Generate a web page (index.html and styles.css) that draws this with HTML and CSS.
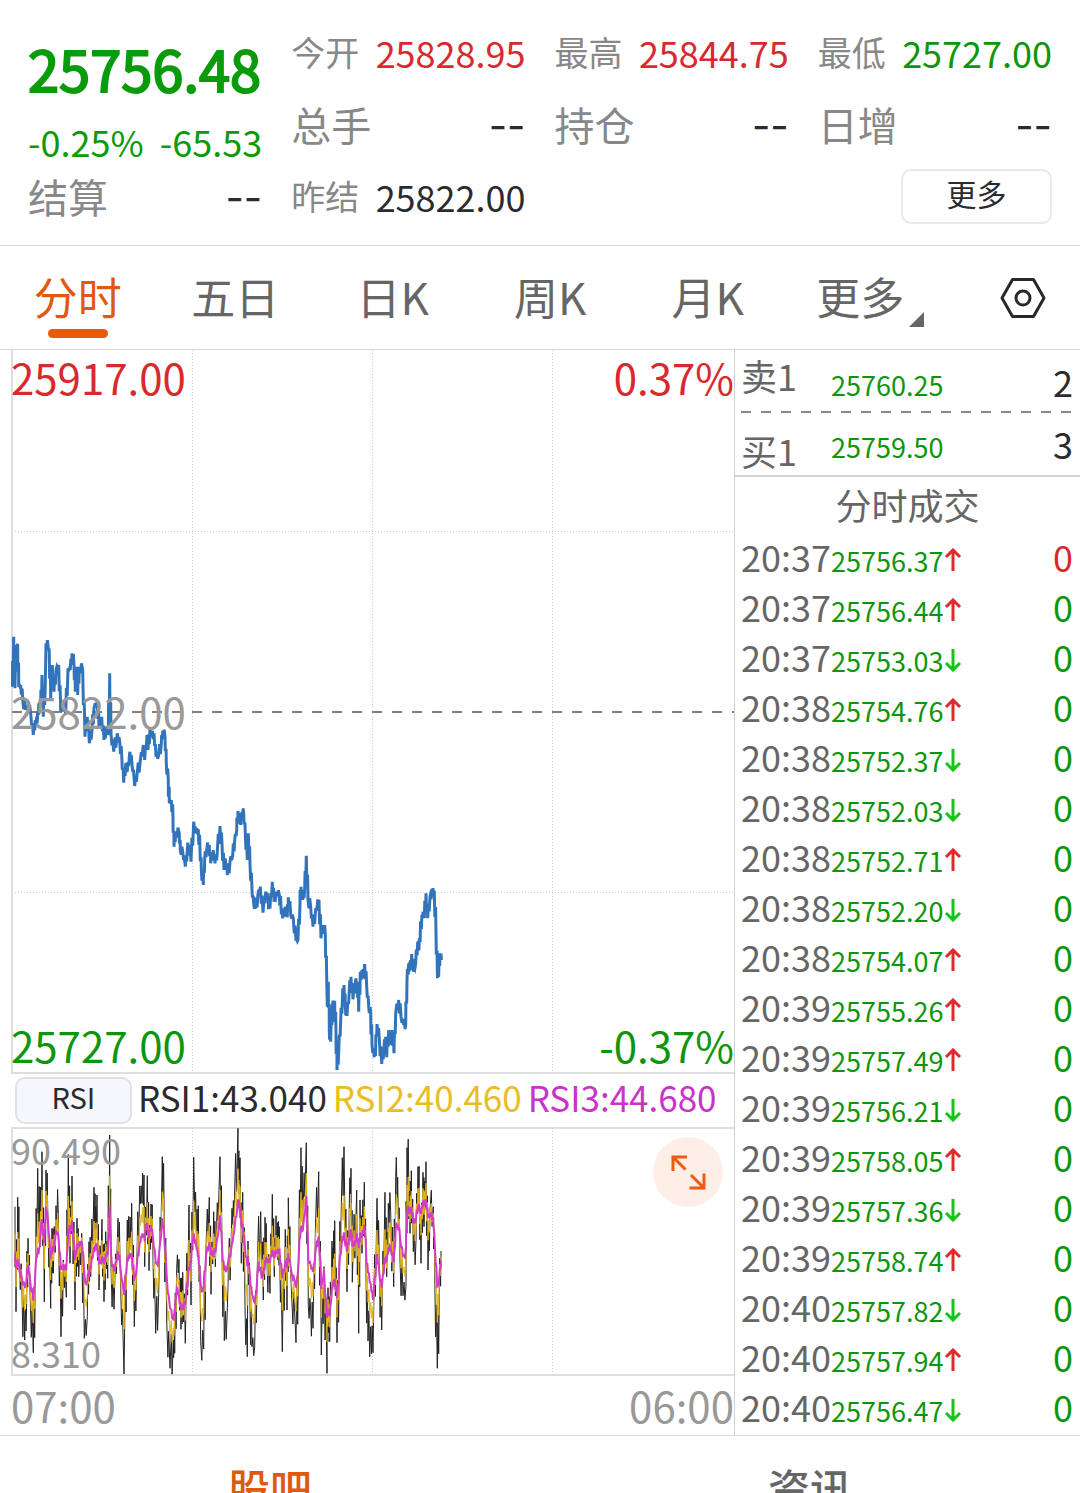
FILE: index.html
```html
<!DOCTYPE html>
<html lang="zh-CN">
<head>
<meta charset="utf-8">
<meta name="viewport" content="width=device-width, initial-scale=1">
<title>分时行情</title>
<link rel="stylesheet" href="styles.css">
</head>
<body>
<svg class="sprite" aria-hidden="true">
  <symbol id="up" viewBox="0 0 18 24"><path d="M9 23V2M2 9l7-7 7 7"/></symbol>
  <symbol id="down" viewBox="0 0 18 24"><path d="M9 1v21M2 15l7 7 7-7"/></symbol>
</svg>
<div class="app">
  <header class="quote">
    <div class="headline">
      <div class="last">25756.48</div>
      <div class="change"><span>-0.25%</span><span>-65.53</span></div>
    </div>
    <div class="stat"><span class="name">今开</span><span class="rise">25828.95</span></div>
    <div class="stat"><span class="name">最高</span><span class="rise">25844.75</span></div>
    <div class="stat"><span class="name">最低</span><span class="fall">25727.00</span></div>
    <div class="stat"><span class="name large">总手</span><span class="empty">--</span></div>
    <div class="stat"><span class="name large">持仓</span><span class="empty">--</span></div>
    <div class="stat"><span class="name large">日增</span><span class="empty">--</span></div>
    <div class="stat"><span class="name large">结算</span><span class="empty">--</span></div>
    <div class="stat"><span class="name">昨结</span><span>25822.00</span></div>
    <button class="more" type="button">更多</button>
  </header>

  <nav class="periods">
    <button class="active" type="button">分时</button>
    <button type="button">五日</button>
    <button type="button">日K</button>
    <button type="button">周K</button>
    <button type="button">月K</button>
    <button class="menu" type="button">更多<svg class="corner" viewBox="0 0 15 15" aria-hidden="true"><path d="M15 0v15H0z"/></svg></button>
    <button class="settings" type="button" aria-label="设置">
      <svg viewBox="0 0 46 42" aria-hidden="true"><path d="M12.500 2.500h21L44 21 33.500 39.500h-21L2 21z"/><circle cx="23" cy="21" r="7"/></svg>
    </button>
  </nav>

  <main class="board">
    <section class="charts">
      <div class="plot price-plot">
        <svg viewBox="11 350 723 724" preserveAspectRatio="none" aria-hidden="true">
          <path class="dots" d="M192.500 350V1073M372.500 350V1073M552.500 350V1073M12 531.500H734M12 892.500H734"/>
          <path class="frame" d="M12 350V1073H734"/>
          <path class="middle" d="M12 712H734"/>
          <path class="price-line" id="price"/>
        </svg>
        <span class="tag top left rise">25917.00</span>
        <span class="tag top right rise">0.37%</span>
        <span class="tag center left muted">25822.00</span>
        <span class="tag bottom left fall">25727.00</span>
        <span class="tag bottom right fall">-0.37%</span>
      </div>
      <div class="indicator">
        <button type="button">RSI</button>
        <span>RSI1:43.040</span>
        <span class="rsi2">RSI2:40.460</span>
        <span class="rsi3">RSI3:44.680</span>
      </div>
      <div class="plot rsi-plot">
        <svg viewBox="11 1127 723 249" preserveAspectRatio="none" aria-hidden="true">
          <path class="dots" d="M192.500 1128V1375M372.500 1128V1375M552.500 1128V1375"/>
          <path class="frame" d="M734 1128H12V1375H734"/>
          <path class="fast" id="rsi1"/>
          <path class="mid" id="rsi2"/>
          <path class="slow" id="rsi3"/>
        </svg>
        <span class="tag top left muted">90.490</span>
        <span class="tag bottom left muted">8.310</span>
        <button class="expand" type="button" aria-label="全屏">
          <svg viewBox="0 0 70 70" aria-hidden="true"><path d="M34 20H20v14M20 20l12.500 12.500M36.500 51H51V36.500M51 51L38 38"/></svg>
        </button>
      </div>
      <div class="times"><span>07:00</span><span>06:00</span></div>
    </section>

    <section class="trades">
      <table class="book">
        <tr class="ask"><th scope="row">卖1</th><td class="price">25760.25</td><td class="qty">2</td></tr>
        <tr class="bid"><th scope="row">买1</th><td class="price">25759.50</td><td class="qty">3</td></tr>
      </table>
      <h2>分时成交</h2>
      <table class="ticks"><tbody id="ticks"></tbody></table>
    </section>
  </main>

  <nav class="sections">
    <a class="active" href="#guba">股吧</a>
    <a href="#news">资讯</a>
  </nav>
</div>
<script src="app.js"></script>
</body>
</html>
```
FILE: styles.css
```css
* { box-sizing: border-box; }

body {
  margin: 0;
  background: #fff;
  color: #2b2b2d;
  font-family: "Noto Sans CJK SC", "Noto Sans", sans-serif;
  font-size: 36px;
}

button {
  padding: 0;
  border: 0;
  background: none;
  color: inherit;
  font: inherit;
}

.sprite { position: absolute; width: 0; height: 0; }

.app {
  display: flex;
  flex-direction: column;
  height: 100vh;
  overflow: hidden;
}

.rise { color: #d9292e; }
.fall { color: #0d960d; }
.muted { color: #999; }

/* Quote header */
.quote {
  display: grid;
  grid-template-columns: repeat(4, 1fr);
  grid-template-rows: repeat(3, 72px);
  column-gap: 29px;
  flex: none;
  padding: 16px 28px 13px;
  border-bottom: 1px solid #d8d8d8;
}

.headline {
  grid-row: span 2;
  padding-top: 20px;
  color: #0a9b0a;
}

.last {
  font-size: 56px;
  line-height: 64px;
  -webkit-text-stroke: 2px currentColor;
}

.change {
  display: flex;
  justify-content: space-between;
  margin-top: 22px;
  line-height: 38px;
}

.stat {
  display: flex;
  align-items: center;
  justify-content: space-between;
  line-height: 72px;
}

.name { color: #888; font-size: 34px; }
.name.large { font-size: 40px; }
.empty { padding-top: 4px; font-family: Inter, sans-serif; font-size: 40px; line-height: 68px; }

.more {
  grid-column: 4;
  justify-self: end;
  align-self: center;
  width: 151px;
  height: 55px;
  padding-bottom: 6px;
  border: 2px solid #e9e9e9;
  border-radius: 10px;
  font-size: 30px;
  line-height: 44px;
}

/* Period tabs */
.periods {
  display: grid;
  grid-template-columns: repeat(6, 7fr) 6fr;
  flex: none;
  height: 104px;
  border-bottom: 1px solid #d8d8d8;
}

.periods button {
  position: relative;
  display: flex;
  align-items: center;
  justify-content: center;
  padding: 0 2px 4px 0;
  color: #666;
  font-size: 44px;
}

.periods .active { color: #e0590f; }

.periods .active::after {
  content: "";
  position: absolute;
  bottom: 11px;
  left: calc(50% - 31px);
  width: 60px;
  height: 9px;
  border-radius: 5px;
  background: #e65a0c;
}

.periods .menu { padding-right: 0; padding-left: 8px; }

.corner {
  align-self: flex-end;
  width: 15px;
  height: 15px;
  margin: 0 0 18px 5px;
  fill: #666;
}

.periods .settings { justify-content: flex-end; padding: 0 34px 0 0; }

.settings svg {
  width: 46px;
  height: 42px;
  fill: none;
  stroke: #28282a;
  stroke-width: 3;
  stroke-linejoin: round;
}

/* Charts and trades */
.board {
  display: grid;
  grid-template-columns: 49fr 23fr;
  flex: none;
  border-bottom: 1px solid #d8d8d8;
}

.charts { border-right: 1px solid #d0d0d0; }

.plot { position: relative; margin-left: 11px; }
.plot > svg { display: block; width: 100%; height: 100%; }
.plot path { fill: none; vector-effect: non-scaling-stroke; }
.price-plot { height: 724px; }
.rsi-plot { height: 249px; }

.frame { stroke: #dedede; stroke-width: 2; }
.dots { stroke: #ccc; stroke-width: 1; stroke-dasharray: 1 2; }
.middle { stroke: #808080; stroke-width: 2; stroke-dasharray: 10 10; }
.price-line { stroke: #3274bb; stroke-width: 3; }
.fast { stroke: #222; stroke-width: 1; }
.mid { stroke: #e3b51c; stroke-width: 1; }
.slow { stroke: #d33bc8; stroke-width: 2; }

.tag { position: absolute; font-size: 42px; line-height: 54px; }
.tag.left { left: 0; }
.tag.right { right: 0; }
.tag.top { top: 0; }
.tag.bottom { bottom: 2px; }
.tag.center { top: calc(50% - 28px); }
.rsi-plot .tag { font-size: 36px; line-height: 44px; }

.indicator {
  display: flex;
  align-items: center;
  gap: 6px;
  height: 53px;
  padding-left: 15px;
  font-size: 35px;
  line-height: 50px;
  white-space: nowrap;
}

.indicator span { padding-bottom: 8px; }

.indicator button {
  width: 117px;
  height: 47px;
  padding-bottom: 8px;
  border: 2px solid #dfe1e5;
  border-radius: 10px;
  background: #f6f7fa;
  font-size: 29px;
  line-height: 35px;
}

.rsi2 { color: #e9bd25; }
.rsi3 { color: #ca33ca; }

.plot .expand {
  position: absolute;
  top: 10px;
  right: 11px;
  width: 70px;
  height: 70px;
  border-radius: 50%;
  background: #fdefe7;
}

.expand svg { display: block; stroke: #ee5a14; stroke-width: 3; }

.times {
  display: flex;
  justify-content: space-between;
  height: 59px;
  padding-left: 11px;
  color: #999;
  font-size: 42px;
  line-height: 58px;
}

table {
  width: 100%;
  border-collapse: collapse;
  table-layout: fixed;
}

th, td { padding: 0; text-align: left; font-weight: 400; }
th { width: 96px; padding-left: 6px; color: #666; }
.price { color: #0d960d; font-size: 27px; white-space: nowrap; }
.qty { width: 60px; padding-right: 7px; text-align: right; }

.book { border-bottom: 2px solid #d4d4d4; }
.book tr { height: 63px; line-height: 50px; vertical-align: bottom; }
.book td { padding-bottom: 4px; line-height: 56px; }
.book .price { padding-bottom: 0; }
.book .ask th { vertical-align: top; }
.book .ask {
  background: repeating-linear-gradient(90deg, #888 0 10px, #fff 10px 20px) 6px 100% / 332px 2px no-repeat;
}

.trades h2 {
  margin: 0;
  color: #666;
  font-size: 36px;
  font-weight: 400;
  line-height: 54px;
  text-align: center;
}

.ticks tr { height: 50px; line-height: 50px; vertical-align: baseline; }
.ticks .price { line-height: 32px; }
.ticks .fall { color: #0d960d; }

.arrow {
  width: 18px;
  height: 24px;
  margin-left: 1px;
  fill: none;
  stroke: #14c41a;
  stroke-width: 3;
}

.arrow.up { stroke: #e0282d; }

/* Bottom sections */
.sections {
  display: grid;
  grid-template-columns: 1fr 1fr;
  flex: 1;
  min-height: 0;
  overflow: hidden;
}

.sections a {
  color: #666;
  font-size: 42px;
  font-weight: 500;
  line-height: 102px;
  text-align: center;
  text-decoration: none;
}

.sections .active { color: #e0590f; }
```
FILE: app.js
```js
// Trades: time, price, direction
const trades = [
  ["20:37", "25756.37", "up"], ["20:37", "25756.44", "up"], ["20:37", "25753.03", "down"],
  ["20:38", "25754.76", "up"], ["20:38", "25752.37", "down"], ["20:38", "25752.03", "down"],
  ["20:38", "25752.71", "up"], ["20:38", "25752.20", "down"], ["20:38", "25754.07", "up"],
  ["20:39", "25755.26", "up"], ["20:39", "25757.49", "up"], ["20:39", "25756.21", "down"],
  ["20:39", "25758.05", "up"], ["20:39", "25757.36", "down"], ["20:39", "25758.74", "up"],
  ["20:40", "25757.82", "down"], ["20:40", "25757.94", "up"], ["20:40", "25756.47", "down"]
];
document.getElementById("ticks").innerHTML = trades.map(([time, price, dir], i) =>
  `<tr><th scope="row">${time}</th><td class="price">${price}<svg class="arrow ${dir}" aria-hidden="true"><use href="#${dir}"/></svg></td><td class="qty ${i ? "fall" : "rise"}">0</td></tr>`
).join("");

// Series are stored as x,y pairs in thirds of a chart unit, in two halves
const parse = (text, x0, y0) => text.trim().split(/\s+/).map(p => {
  const [x, y] = p.split(",").map(Number);
  return [x0 + x / 3, y0 + y / 3];
});
const path = pts => "M" + pts.map(([x, y]) => x.toFixed(1) + " " + y.toFixed(1)).join("L");
const draw = (id, pts) => document.getElementById(id).setAttribute("d", path(pts));

const at = (pts, x) => {
  const i = pts.findIndex(p => p[0] >= x);
  if (i <= 0) return pts[i ? pts.length - 1 : 0][1];
  const [x1, y1] = pts[i - 1], [x2, y2] = pts[i];
  return y1 + (y2 - y1) * (x - x1) / (x2 - x1);
};

// Minute-by-minute swings between the turning points of a series
const swings = (pts, low, spread) => {
  const out = [];
  pts.forEach(([x, y], i) => {
    out.push([x, y]);
    const next = pts[i + 1];
    if (!next || next[0] - x < 1) return;
    const mx = (x + next[0]) / 2, my = (y + next[1]) / 2;
    const swing = (low + (i * 7) % spread) * (next[1] > y ? 1 : -1);
    out.push([mx - 0.4, my + swing], [mx + 0.4, my - swing]);
  });
  return out;
};

const price = parse(`37,200 41,50 45,205 50,75 53,80 56,200 62,195 68,235 76,270 84,255 92,280 100,345 106,300 112,310 116,250 122,260 126,165 130,290 136,190 138,70 144,75 148,100 152,235 157,135 162,215 168,150 176,135 182,275 190,245 197,285 204,145 211,150 216,100 222,135 226,215 230,140 233,225 238,140 248,150 255,350 262,290 268,370 276,330 282,265 292,245 297,325 305,290 312,360 318,320 325,345 329,160 333,340 341,395 352,340 360,375 365,405 371,488 377,430 382,455 388,410 394,405 404,498 412,455 420,430 430,375 434,420 441,345 444,390 450,325 455,350 462,340 468,410 476,405 484,370 488,332 495,350 499,430 505,480 508,550 514,540 519,590 522,680 527,635 538,640 541,690 548,695 556,740 562,690 567,675 573,725 581,605 588,640 595,628 600,690 604,745 610,795 614,715 620,690 628,675 632,730 640,690 645,730 652,695`, 0, 620)
  .concat(parse(`0,78 6,130 12,210 16,175 22,225 30,185 38,165 44,120 50,90 54,33 62,75 66,35 71,40 76,100 82,180 85,100 90,190 96,270 101,310 107,325 113,290 121,260 129,338 137,275 144,300 150,325 157,245 162,305 170,275 178,285 183,320 188,355 196,320 202,352 205,292 212,345 220,355 228,422 234,420 240,310 243,260 248,300 254,265 259,167 264,300 272,320 279,380 286,340 292,315 297,300 303,415 309,375 316,400 320,540 322,620 325,545 328,690 332,725 337,620 344,602 348,700 351,810 356,755 362,660 367,605 372,555 376,620 381,648 388,570 393,530 399,598 406,550 412,545 416,635 421,515 428,535 434,492 440,560 446,620 452,640 456,735 463,772 467,740 471,672 478,715 485,792 492,750 497,710 500,772 506,690 512,735 516,690 522,760 527,640 536,600 543,650 551,675 557,675 561,540 566,490 571,510 575,462 580,515 587,490 593,425 597,450 601,392 605,360 609,335 613,355 618,280 623,355 630,290 637,275 643,272 648,400 652,515 656,530 660,460 664,480`, 220, 800));
draw("price", swings(price, 1, 5));

const slow = parse(`45,600 60,640 75,665 84,625 92,665 100,700 110,600 118,590 124,490 132,545 137,450 145,490 152,575 160,565 168,520 176,540 184,610 200,620 206,515 216,500 225,580 240,540 248,550 256,655 268,640 280,590 290,565 300,610 315,595 325,570 329,470 334,600 345,625 352,580 362,620 371,680 380,610 393,590 404,650 415,590 425,545 433,545 438,490 446,525 452,500 460,530 470,600 480,560 487,500 494,540 502,660 510,720 520,770 530,690 540,735 550,750 558,700 568,640 578,545 590,570 600,640 608,680 618,590 630,560 640,590 650,560`, 0, 1060)
  .concat(parse(`0,490 10,600 20,610 35,570 45,510 55,440 65,490 75,540 85,600 95,680 106,715 115,620 125,660 140,600 160,590 178,575 188,630 204,600 215,630 230,665 240,540 250,510 259,430 265,580 280,615 290,570 298,550 304,660 312,630 320,750 330,760 338,680 346,680 352,700 360,600 370,550 380,560 392,530 402,560 412,530 425,530 434,510 440,590 450,640 460,705 470,600 478,640 486,670 495,620 505,580 515,580 522,600 528,515 538,510 548,570 556,580 562,470 572,450 582,480 595,450 605,440 615,425 625,455 640,480 648,590 653,665 658,640 664,600`, 220, 1060));

const fast = parse(`45,440 48,755 53,412 58,600 66,700 74,840 80,720 84,535 90,690 100,878 106,650 113,325 120,560 126,275 133,725 138,330 143,450 152,745 156,505 160,640 168,437 175,460 183,830 190,600 199,712 205,283 210,610 216,348 225,750 231,475 236,650 245,520 253,835 262,770 267,545 272,650 282,382 286,540 291,405 297,690 306,478 312,725 317,515 323,655 329,225 333,620 342,748 354,475 360,600 372,942 382,480 388,590 395,430 403,800 410,640 419,378 426,430 432,345 434,620 442,347 447,632 453,432 458,550 467,820 476,700 487,290 492,420 500,780 510,925 520,840 524,880 530,625 537,598 543,808 548,637 556,850 567,435 573,735 581,292 590,560 595,437 602,845 611,867 618,560 628,412 633,703 641,455 646,620`, 0, 1060)
  .concat(parse(`0,290 6,560 13,842 22,750 36,445 42,470 54,205 57,400 60,293 64,610 68,397 75,740 82,890 84,543 90,740 96,860 104,860 112,620 122,455 130,720 135,472 140,580 150,700 157,403 163,650 168,467 174,600 178,500 187,875 196,508 201,750 205,413 212,640 228,848 236,600 243,263 248,500 259,248 265,740 272,750 279,805 286,520 296,335 304,885 312,620 321,940 324,683 329,845 336,543 340,680 344,482 351,848 358,600 364,440 372,260 381,695 388,430 393,325 397,667 410,390 416,820 420,420 426,580 433,367 438,640 444,843 452,800 459,878 471,415 478,620 485,810 495,397 500,650 505,430 512,455 521,680 527,352 533,352 540,600 549,707 558,680 561,263 566,350 570,520 574,332 580,575 588,540 594,320 598,420 603,610 609,337 612,500 618,305 624,630 630,450 640,440 644,640 652,925 658,700 663,573`, 220, 1060));

const dense = swings(fast, 8, 16);
const blend = k => dense.map(([x, y]) => {
  const base = at(slow, x);
  return [x, base + (y - base) * k];
});
draw("rsi1", dense);
draw("rsi2", blend(0.5));
draw("rsi3", blend(0.12));
```
